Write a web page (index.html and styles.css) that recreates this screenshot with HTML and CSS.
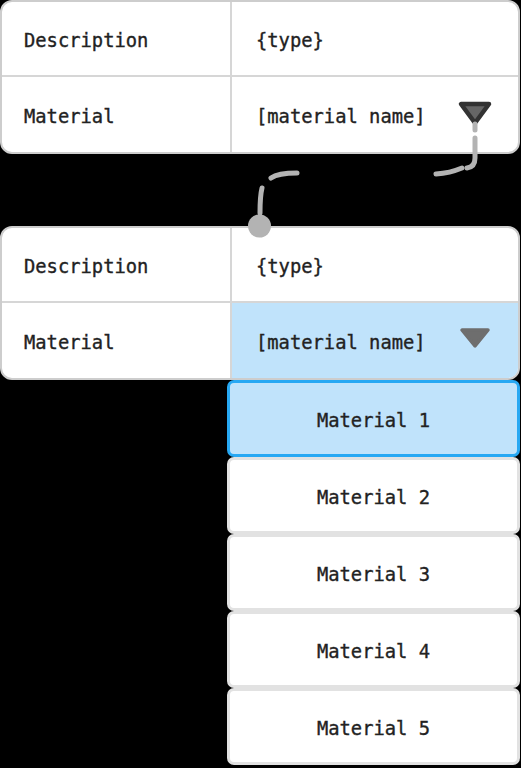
FILE: index.html
```html
<!DOCTYPE html>
<html lang="en">
<head>
<meta charset="utf-8">
<title>Material select</title>
<link rel="stylesheet" href="styles.css">
</head>
<body>
<div class="page">
  <div class="card">
    <div class="cell label row1">Description</div>
    <div class="cell value row1">{type}</div>
    <div class="cell label">Material</div>
    <div class="cell value select">
      <span>[material name]</span>
      <svg class="tri tri-outline" width="36" height="28" viewBox="0 0 36 28"><polygon points="4,4 32,4 18,23" /></svg>
    </div>
  </div>

  <div class="card second">
    <div class="cell label row1">Description</div>
    <div class="cell value row1">{type}</div>
    <div class="cell label">Material</div>
    <div class="cell value select active">
      <span>[material name]</span>
      <svg class="tri tri-solid" width="36" height="28" viewBox="0 0 36 28"><polygon points="5,4 31,4 18,20" /></svg>
    </div>
  </div>

  <ul class="dropdown">
    <li class="option selected">Material 1</li>
    <li class="option">Material 2</li>
    <li class="option">Material 3</li>
    <li class="option">Material 4</li>
    <li class="option">Material 5</li>
  </ul>

  <svg class="connector" width="521" height="768" viewBox="0 0 521 768">
    <g fill="none" stroke="#b3b3b3" stroke-width="5" stroke-linecap="round">
      <path d="M475 124 V130" />
      <path d="M475 138 V158 Q475 167 467 168" />
      <path d="M462 168 Q450 173 436 174" />
      <path d="M297 173 Q278 173 271 178" />
      <path d="M262 188 Q260 196 260 213" />
    </g>
    <circle cx="259.5" cy="226" r="11.5" fill="#b3b3b3" />
  </svg>
</div>
</body>
</html>
```

FILE: styles.css
```css
html, body {
  margin: 0;
  padding: 0;
  background: #000;
}

.page {
  position: relative;
  width: 521px;
  height: 768px;
  overflow: hidden;
  font-family: "DejaVu Sans Mono", "Liberation Mono", monospace;
  font-size: 18.8px;
  color: #222;
  -webkit-text-stroke: 0.35px #222;
}

.card {
  box-sizing: border-box;
  width: 520px;
  display: grid;
  grid-template-columns: 228px 1fr;
  grid-template-rows: 75px 75px;
  background: #fff;
  border: 2px solid #cdcdcd;
  border-radius: 12px;
  overflow: hidden;
}

.card.second {
  margin-top: 72px;
}

.cell {
  box-sizing: border-box;
  display: flex;
  align-items: center;
  white-space: nowrap;
  padding-top: 3px;
}

.label {
  padding-left: 22px;
}

.value {
  border-left: 2px solid #d6d6d6;
  padding-left: 24px;
}

.row1 {
  border-bottom: 2px solid #d6d6d6;
}

.select {
  justify-content: space-between;
  padding-right: 25px;
}

.select .tri {
  margin-top: -4px;
}

.select.active {
  background: #c0e3fb;
}

.tri-outline polygon {
  fill: #666;
  stroke: #333;
  stroke-width: 4.5;
  stroke-linejoin: round;
}

.tri-solid polygon {
  fill: #6e6e6e;
  stroke: #6e6e6e;
  stroke-width: 3.5;
  stroke-linejoin: round;
}

.dropdown {
  list-style: none;
  margin: 0 0 0 227px;
  padding: 0;
  width: 293px;
}

.option {
  box-sizing: border-box;
  height: 77px;
  padding-top: 3px;
  display: flex;
  align-items: center;
  justify-content: center;
  background: #fff;
  border: 3px solid #e2e2e2;
  border-radius: 7px;
}

.option.selected {
  background: #c0e3fb;
  border: 3px solid #27a8f3;
}

.connector {
  position: absolute;
  left: 0;
  top: 0;
  pointer-events: none;
}
```
